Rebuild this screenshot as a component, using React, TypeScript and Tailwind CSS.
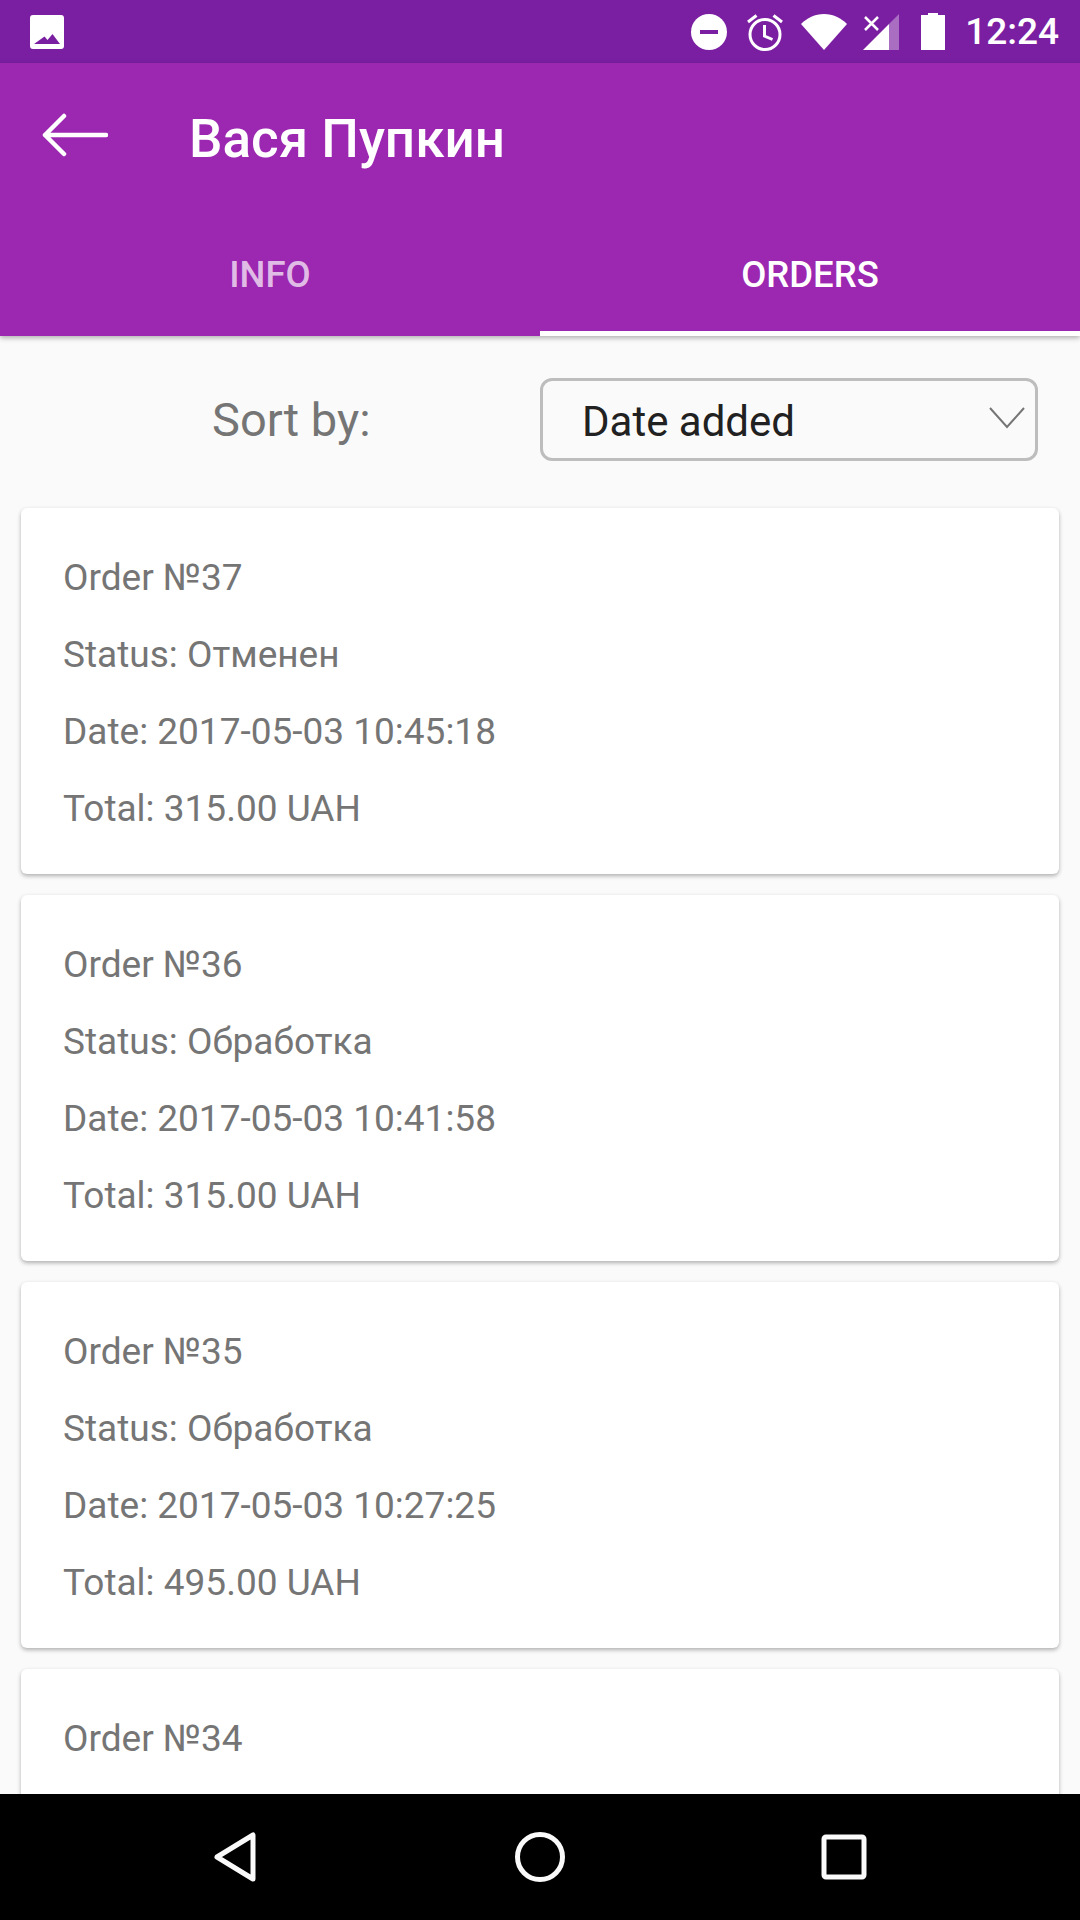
type Order = { id: number; status?: string; date?: string; total?: string };

const ORDERS: Order[] = [
  { id: 37, status: "Отменен", date: "2017-05-03 10:45:18", total: "315.00" },
  { id: 36, status: "Обработка", date: "2017-05-03 10:41:58", total: "315.00" },
  { id: 35, status: "Обработка", date: "2017-05-03 10:27:25", total: "495.00" },
  { id: 34 },
];

function StatusBar() {
  return (
    <div className="h-[63px] shrink-0 bg-[#7b1fa2] flex items-center justify-between pl-[30px] pr-[21px]">
      {/* image notification */}
      <svg width="34" height="34" viewBox="0 0 34 34">
        <path fillRule="evenodd" fill="#fff" d="M3 0h28a3 3 0 0 1 3 3v28a3 3 0 0 1-3 3H3a3 3 0 0 1-3-3V3a3 3 0 0 1 3-3zM4 29h26l-7.500-10-5 6-3-3.500z" />
      </svg>
      <div className="flex items-center">
        <svg width="36" height="36" viewBox="0 0 36 36" className="mr-[20px]">
          <circle cx="18" cy="18" r="18" fill="#fff" />
          <rect x="9" y="16" width="18" height="4" fill="#7b1fa2" />
        </svg>
        <svg width="36" height="38" viewBox="0 0 36 38" fill="none" stroke="#fff" strokeWidth="3" className="mr-[18px]">
          <circle cx="18" cy="21.500" r="15" />
          <path d="M17.500 12v11l8 3.500" />
          <path d="M1 9 9.500 2.500M35 9 26.500 2.500" />
        </svg>
        <svg width="46" height="36" viewBox="0 0 46 36" className="mr-[16px]">
          <path fill="#fff" d="M23 36 0 10C6 4 14 0 23 0s17 4 23 10z" />
        </svg>
        <svg width="36" height="36" viewBox="0 0 36 36" className="mr-[22px]">
          <path fill="#fff" fillOpacity="0.35" d="M36 0v36H26V10z" />
          <path fill="#fff" d="M26 10v26H0z" />
          <path stroke="#fff" strokeWidth="2.500" d="M2 3l13 13M15 3 2 16" />
        </svg>
        <svg width="24" height="37" viewBox="0 0 24 37" className="mr-[20px]">
          <path fill="#fff" d="M7 0h10v2h7v35H0V2h7z" />
        </svg>
        <span className="text-[37px] leading-none font-medium text-white">12:24</span>
      </div>
    </div>
  );
}

function AppBar() {
  return (
    <div className="shrink-0 bg-[#9c27b0] shadow-[0_2px_5px_rgba(0,0,0,0.3)] relative">
      <div className="h-[147px] flex items-center pl-[42px]">
        <svg width="66" height="44" viewBox="0 0 66 44" fill="none" stroke="#fff" strokeWidth="4.500" strokeLinecap="round" strokeLinejoin="round" className="mb-[4px]">
          <path d="M64 22H3M22 3 3 22l19 19" />
        </svg>
        <span className="ml-[81px] mt-[5px] text-[53px] leading-none font-medium text-white">Вася Пупкин</span>
      </div>
      <div className="flex h-[126px]">
        <div className="flex-1 flex items-center justify-center text-[36.500px] font-medium text-white/70 pt-[4px]">INFO</div>
        <div className="flex-1 flex items-center justify-center text-[36.500px] font-medium text-white border-b-[5px] border-white pt-[9px]">ORDERS</div>
      </div>
    </div>
  );
}

function SortRow() {
  return (
    <div className="flex items-center h-[172px] shrink-0 pb-[6px]">
      <div className="w-[540px] pl-[212px] text-[47px] text-[#757575] mt-[2px]">Sort by:</div>
      <div className="w-[498px] h-[83px] border-[3px] border-[#bdbdbd] rounded-[12px] flex items-center justify-between pl-[39px] pr-[10px]">
        <span className="text-[42px] text-[#212121] mt-[4px]">Date added</span>
        <svg width="36" height="22" viewBox="0 0 36 22" fill="none" stroke="#757575" strokeWidth="2" className="mb-[2px]">
          <path d="M1 1l17 19L35 1" />
        </svg>
      </div>
    </div>
  );
}

function OrderCard({ id, status, date, total }: Order) {
  return (
    <div className="shrink-0 h-[366px] bg-white rounded-[6px] shadow-[0_2px_4px_rgba(0,0,0,0.3)] pl-[42px] pt-[31px] text-[37px] leading-[77px] text-[#757575]">
      <div>Order №{id}</div>
      {status && <div>Status: {status}</div>}
      {date && <div>Date: {date}</div>}
      {total && <div>Total: {total} UAH</div>}
    </div>
  );
}

function NavBar() {
  return (
    <div className="h-[126px] shrink-0 bg-black relative z-10 flex items-center pl-[212px]">
      <svg width="46" height="52" viewBox="0 0 46 52" fill="none" stroke="#fafafa" strokeWidth="5" strokeLinejoin="round">
        <path d="M41 4v44L5 26z" />
      </svg>
      <svg width="52" height="52" viewBox="0 0 52 52" fill="none" stroke="#fafafa" strokeWidth="5" className="ml-[256px]">
        <circle cx="26" cy="26" r="22.500" />
      </svg>
      <svg width="46" height="46" viewBox="0 0 46 46" fill="none" stroke="#fafafa" strokeWidth="5" strokeLinejoin="round" className="ml-[255px]">
        <rect x="3" y="3" width="40" height="40" rx="2" />
      </svg>
    </div>
  );
}

export default function App() {
  return (
    <div className="w-[1080px] h-[1920px] flex flex-col overflow-hidden bg-[#fafafa] font-['Roboto',sans-serif]">
      <StatusBar />
      <AppBar />
      <div className="flex-1 min-h-0 overflow-hidden flex flex-col">
        <SortRow />
        <div className="flex flex-col gap-[21px] px-[21px]">
          {ORDERS.map((order) => (
            <OrderCard key={order.id} {...order} />
          ))}
        </div>
      </div>
      <NavBar />
    </div>
  );
}
